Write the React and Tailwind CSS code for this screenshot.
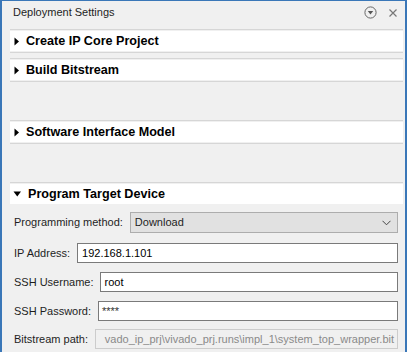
import React from "react";

const font = { fontFamily: '"Liberation Sans", Arial, sans-serif' };

function Header({ title, open }) {
  return (
    <div className="flex flex-col">
      <div className="h-px bg-[#d6d6d6]" />
      <div className="h-px" />
      <div className="h-[20px] bg-white flex items-center pl-[4px]">
        {open ? (
          <svg width="9" height="8" viewBox="0 0 9 8" className="ml-[-1px] mr-[6px]">
            <path d="M0.5 1.5 L8 1.5 L4.25 6.5 Z" fill="#000" />
          </svg>
        ) : (
          <svg width="6" height="9" viewBox="0 0 6 9" className="mr-[6px]">
            <path d="M0.5 0.5 L5 4.5 L0.5 8.5 Z" fill="#000" />
          </svg>
        )}
        <span className="text-[12.6px] font-bold text-black leading-none">{title}</span>
      </div>
    </div>
  );
}

function Bottom() {
  return (
    <>
      <div className="h-px" />
      <div className="h-px bg-[#d6d6d6]" />
    </>
  );
}

function Row({ label, children, mt }) {
  return (
    <div className={`flex items-center ${mt}`}>
      <span className="text-[11px] text-[#1e1e1e] whitespace-nowrap mr-[7px]">{label}</span>
      {children}
    </div>
  );
}

export default function App() {
  return (
    <div
      className="w-[407px] h-[352px] bg-[#f0f0f0] border-t border-l-2 border-r-2 border-[#3a77b8] overflow-hidden flex flex-col"
      style={font}
    >
      <div className="h-[28px] flex items-start pt-[4px] pl-[11px] pr-[7px]">
        <span className="text-[11px] text-[#1e1e1e] leading-[14px]">Deployment Settings</span>
        <div className="ml-auto flex items-center gap-[11px] mt-[1px]">
          <svg width="13" height="13" viewBox="0 0 13 13">
            <circle cx="6.5" cy="6.5" r="5.6" fill="none" stroke="#666" strokeWidth="1" />
            <path d="M3.8 5 L9.2 5 L6.5 8.4 Z" fill="#555" />
          </svg>
          <svg width="10" height="10" viewBox="0 0 10 10">
            <path d="M1.5 1.5 L8.5 8.5 M8.5 1.5 L1.5 8.5" stroke="#777" strokeWidth="1.2" />
          </svg>
        </div>
      </div>

      <div className="ml-[8px] mr-[2px] flex flex-col">
        <Header title="Create IP Core Project" />
        <Bottom />
        <div className="h-[5px]" />
        <Header title="Build Bitstream" />
        <Bottom />
        <div className="h-[38px]" />
        <Header title="Software Interface Model" />
        <Bottom />
        <div className="h-[38px]" />
        <Header title="Program Target Device" open />

        <div className="flex flex-col pl-[4px] pr-[5px] pt-[8px]">
          <Row label="Programming method:" mt="">
            <div className="flex-1 h-[21px] bg-[#e1e1e1] border border-[#adadad] flex items-center pl-[4px] pr-[6px] text-[11px] text-[#1e1e1e]">
              <span>Download</span>
              <svg width="9" height="6" viewBox="0 0 9 6" className="ml-auto">
                <path d="M0.5 0.8 L4.5 4.8 L8.5 0.8" fill="none" stroke="#444" strokeWidth="1" />
              </svg>
            </div>
          </Row>
          <Row label="IP Address:" mt="mt-[10px]">
            <div className="flex-1 h-[20px] bg-white border border-[#7a7a7a] flex items-center pl-[4px] text-[11px] text-black">
              192.168.1.101
            </div>
          </Row>
          <Row label="SSH Username:" mt="mt-[9px]">
            <div className="flex-1 h-[20px] bg-white border border-[#7a7a7a] flex items-center pl-[3px] text-[11px] text-black">
              root
            </div>
          </Row>
          <Row label="SSH Password:" mt="mt-[9px]">
            <div className="flex-1 h-[20px] bg-white border border-[#7a7a7a] flex items-center pl-[3px] text-[11px] text-[#333]">
              ****
            </div>
          </Row>
          <Row label="Bitstream path:" mt="mt-[8px]">
            <div className="flex-1 min-w-0 h-[20px] bg-[#f0f0f0] border border-[#cccccc] flex items-center justify-end pr-[3px] text-[11px] text-[#8a8a8a] overflow-hidden whitespace-nowrap">
              <span>vado_ip_prj\vivado_prj.runs\impl_1\system_top_wrapper.bit</span>
            </div>
          </Row>
        </div>
      </div>
    </div>
  );
}
